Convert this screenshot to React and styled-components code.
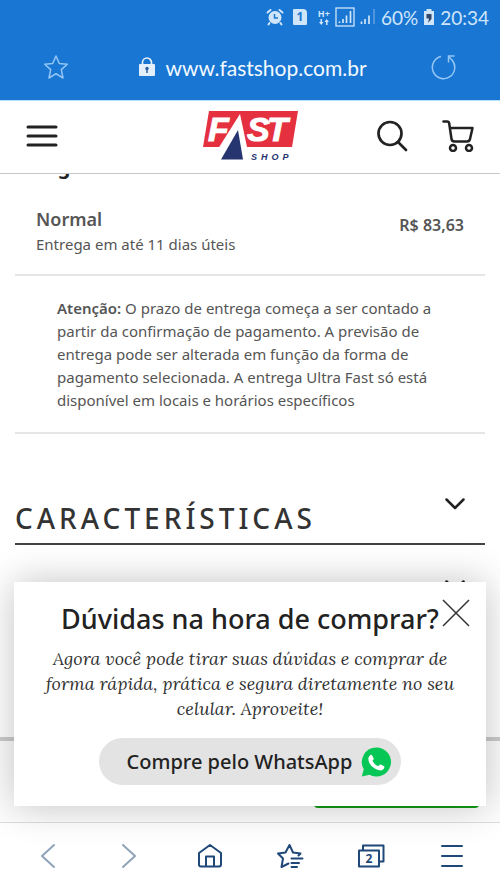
import styled, { createGlobalStyle } from 'styled-components';

const GlobalStyle = createGlobalStyle`
    * {
        box-sizing: border-box;
    }

    body {
        margin: 0;
        background: white;
        font-family: "Noto Sans", "Open Sans", sans-serif;
        color: #555;
    }

    h2, p {
        margin: 0;
    }

    button {
        padding: 0;
        border: none;
        background: none;
        font: inherit;
        color: inherit;
        cursor: pointer;
    }

    svg {
        display: block;
    }
`;

function StatusBar() {
    return (
        <Status>
            <svg width="18" height="18" viewBox="0 0 18 18" fill="none">
                <circle cx="9" cy="9.5" r="6.5" fill="#cfe5fa" />
                <path d="M1.500 4.500L4.500 2M16.500 4.500L13.500 2M3.500 15L2.500 16.500M14.500 15L15.500 16.500" stroke="#cfe5fa" strokeWidth="2" strokeLinecap="round" />
                <path d="M8.5 6v4H12" stroke="#1976d2" strokeWidth="1.5" />
            </svg>
            <SimCard>1</SimCard>
            <Network>
                <span>H+</span>
                <svg width="10" height="6" viewBox="0 0 10 6" fill="#cfe5fa">
                    <path d="M0 3h1.500V0h1.500v3H4.500L2.200 6zM5.500 3L7.700 0 10 3H8.500v3H7V3z" />
                </svg>
            </Network>
            <svg width="20" height="20" viewBox="0 0 20 20" fill="none" stroke="#cfe5fa">
                <rect x="1" y="1" width="18" height="18" strokeWidth="1.3" />
                <path d="M4.500 14.500V16M8 12v4M11.500 8.500V16M15.500 4v12" strokeWidth="1.7" />
            </svg>
            <svg width="16" height="20" viewBox="0 0 16 20" fill="none" stroke="#cfe5fa" strokeWidth="1.7">
                <path d="M1.500 14.500V17M5 12v5M9 8.500V17" />
                <path d="M14 2v15" strokeWidth="1" opacity="0.6" />
            </svg>
            <StatusText>60%</StatusText>
            <svg width="12" height="18" viewBox="0 0 12 18">
                <path d="M3.500 1h5v2H11v14H1V3h2.500z" fill="#cfe5fa" />
                <path d="M3.500 6h5v5L5 15l1-4.500H3.500z" fill="#31486b" />
            </svg>
            <StatusText>20:34</StatusText>
        </Status>
    );
}

function FastShopLogo() {
    return (
        <svg width="96" height="54" viewBox="0 0 96 54" role="img" aria-label="Fast Shop">
            <path d="M7 2H96L90 38H1z" fill="#e4303f" />
            <g fill="white" stroke="white" fontFamily="Liberation Sans" fontWeight="700" fontStyle="italic" fontSize="34">
                <text x="6" y="32">F</text>
                <text x="45" y="32">S</text>
                <text x="65" y="32">T</text>
            </g>
            <path d="M38 5L14 43V52H47L45 38z" fill="white" />
            <path d="M36 21L19 50.500H41z" fill="#26356f" />
            <text x="49" y="51" fill="#26356f" fontFamily="Liberation Sans" fontWeight="700" fontStyle="italic" fontSize="9" letterSpacing="4">SHOP</text>
        </svg>
    );
}

function Chevron() {
    return (
        <svg width="20" height="12" viewBox="0 0 20 12" fill="none" stroke="#222" strokeWidth="2.5" strokeLinecap="round" strokeLinejoin="round">
            <path d="M1.500 1.500L10 10l8.500-8.500" />
        </svg>
    );
}

function WhatsAppIcon() {
    return (
        <svg width="30" height="30" viewBox="0 0 30 30">
            <path d="M15.500.5a14.500 14.500 0 1 1-7 27.200L.8 29.500l2-7.200A14.500 14.500 0 0 1 15.500.5z" fill="#06c755" />
            <path d="M9 8.500c.8-.8 1.800-.9 2.200-.1l1.500 3c.3.700 0 1.200-1.200 2.400 1.300 2.600 3 4.200 5.800 5.400 1.200-1.500 1.700-1.900 2.400-1.600l3.100 1.500c.6.300.7.700.5 1.400-.6 2.200-2.700 3.200-4.800 2.800-5.400-1-9.900-5.100-11-9.900-.4-2 .2-3.800 1.500-4.900z" fill="white" />
        </svg>
    );
}

function Popup() {
    return (
        <PopupBox role="dialog" aria-labelledby="popup-title">
            <CloseButton aria-label="Fechar">
                <svg width="28" height="28" viewBox="0 0 28 28" stroke="#333" strokeWidth="1.5">
                    <path d="M1 1l26 26M27 1L1 27" />
                </svg>
            </CloseButton>
            <PopupTitle id="popup-title">Dúvidas na hora de comprar?</PopupTitle>
            <PopupText>
                Agora você pode tirar suas dúvidas e comprar de forma rápida, prática e segura diretamente no seu celular. Aproveite!
            </PopupText>
            <WhatsAppButton>
                Compre pelo WhatsApp
                <WhatsAppIcon />
            </WhatsAppButton>
        </PopupBox>
    );
}

function BottomNav() {
    return (
        <Nav>
            <NavButton aria-label="Voltar" $muted>
                <svg width="28" height="28" viewBox="0 0 28 28"><path d="M20 3L8 14l12 11" /></svg>
            </NavButton>
            <NavButton aria-label="Avançar" $muted>
                <svg width="28" height="28" viewBox="0 0 28 28"><path d="M8 3l12 11L8 25" /></svg>
            </NavButton>
            <NavButton aria-label="Início">
                <svg width="28" height="28" viewBox="0 0 28 28">
                    <path d="M14 3L3 11v11.500q0 2 2 2H23q2 0 2-2V11zM10 24.500V14.500h8v10" />
                </svg>
            </NavButton>
            <NavButton aria-label="Favoritos">
                <svg width="28" height="28" viewBox="0 0 28 28">
                    <path d="M12.500 21.500L5.500 25l1.500-8.500L2 11.500l7.500-1L13.500 3l3.500 7.500 7.500 1-2 2M15.500 16.500h11M15.500 21h7.500M15.500 25h5.500" />
                </svg>
            </NavButton>
            <NavButton aria-label="Abas">
                <svg width="28" height="28" viewBox="0 0 28 28">
                    <path d="M2 8.500h20v16H2zM6 8.500V3.500h20.500v16H22" />
                    <text x="12" y="21" textAnchor="middle" fontSize="12" fontWeight="700">2</text>
                </svg>
            </NavButton>
            <NavButton aria-label="Menu">
                <svg width="28" height="28" viewBox="0 0 28 28"><path d="M4 4h20M4 14h20M4 24h20" /></svg>
            </NavButton>
        </Nav>
    );
}

export default function App() {
    return (
        <Screen>
            <GlobalStyle />
            <Browser>
                <StatusBar />
                <AddressBar>
                    <button aria-label="Favoritar">
                        <svg width="26" height="26" viewBox="0 0 26 26" fill="none" stroke="#94c6f5" strokeWidth="1.5" strokeLinejoin="round">
                            <path d="M13 2l3.300 7.500 8 .8-6 5.300 1.700 8.400-7-4.300L6 24l1.700-8.400-6-5.300 8-.8z" />
                        </svg>
                    </button>
                    <Url>
                        <svg width="16" height="20" viewBox="0 0 16 20">
                            <path d="M3.500 9V5.500a4.500 4.500 0 0 1 9 0V9" fill="none" stroke="#e3effb" strokeWidth="1.7" />
                            <rect y="7" width="16" height="12" rx="1" fill="#e3effb" />
                            <circle cx="8" cy="11.5" r="1.7" fill="#2a5f9e" />
                            <path d="M8 11v5" stroke="#2a5f9e" strokeWidth="1.5" />
                        </svg>
                        www.fastshop.com.br
                    </Url>
                    <button aria-label="Atualizar">
                        <svg width="26" height="26" viewBox="0 0 26 26" fill="none" stroke="#94c6f5" strokeWidth="1.5">
                            <path d="M10 2.500a11.200 11.200 0 1 0 10.500 3L17.500 2.500M23.500 2H17.500v6.500" />
                        </svg>
                    </button>
                </AddressBar>
            </Browser>
            <SiteHeader>
                <button aria-label="Abrir menu">
                    <svg width="32" height="24" viewBox="0 0 32 24" stroke="#222" strokeWidth="3" strokeLinecap="round">
                        <path d="M2 3h28M2 12h28M2 21h28" />
                    </svg>
                </button>
                <LogoLink href="#"><FastShopLogo /></LogoLink>
                <HeaderActions>
                    <button aria-label="Buscar">
                        <svg width="32" height="32" viewBox="0 0 32 32" fill="none" stroke="#222" strokeWidth="2.7" strokeLinecap="round">
                            <circle cx="14" cy="13.5" r="11.5" />
                            <path d="M22 22l8 8" />
                        </svg>
                    </button>
                    <button aria-label="Carrinho">
                        <svg width="32" height="32" viewBox="0 0 32 32" fill="none" stroke="#222" strokeWidth="2.5" strokeLinecap="round" strokeLinejoin="round">
                            <path d="M1.500 1.500H5q2 0 2.200 2L9.500 19q.4 2.500 3 2.500H25q2.500 0 3-2.500l2.500-11H8" />
                            <circle cx="11" cy="28" r="3" />
                            <circle cx="27" cy="28" r="3" />
                        </svg>
                    </button>
                </HeaderActions>
            </SiteHeader>
            <Page>
                <Content>
                    <ScrolledLine>rg</ScrolledLine>
                    <ShippingRow>
                        <div>
                            <ShippingName>Normal</ShippingName>
                            <ShippingTime>Entrega em até 11 dias úteis</ShippingTime>
                        </div>
                        <ShippingPrice>R$ 83,63</ShippingPrice>
                    </ShippingRow>
                    <Notice>
                        <strong>Atenção:</strong> O prazo de entrega começa a ser contado a partir da confirmação de pagamento. A previsão de entrega pode ser alterada em função da forma de pagamento selecionada. A entrega Ultra Fast só está disponível em locais e horários específicos
                    </Notice>
                    <SectionButton>
                        <SectionTitle>CARACTERÍSTICAS</SectionTitle>
                        <Chevron />
                    </SectionButton>
                    <NextSection aria-label="Próxima seção">
                        <Chevron />
                    </NextSection>
                </Content>
                <BuyBar>
                    <BuyButton aria-label="Comprar" />
                </BuyBar>
                <Popup />
            </Page>
            <BottomNav />
        </Screen>
    );
}

const Screen = styled.div`
    height: 100vh;
    display: flex;
    flex-direction: column;
`;

const Browser = styled.header`
    background: #1976d2;
    border-bottom: 1px solid #b5e0fb;
`;

const Status = styled.div`
    height: 34px;
    padding: 0 11px;
    display: flex;
    justify-content: flex-end;
    align-items: center;
    gap: 5px;
    color: #cfe5fa;
`;

const SimCard = styled.span`
    width: 14px;
    height: 16px;
    margin: 0 6px 0 4px;
    border-radius: 1px 4px 1px 1px;
    background: #cfe5fa;
    color: #1976d2;
    font-size: 12px;
    font-weight: 700;
    line-height: 16px;
    text-align: center;
`;

const Network = styled.span`
    display: flex;
    flex-direction: column;
    align-items: center;
    font-size: 9px;
    font-weight: 700;
    line-height: 10px;
`;

const StatusText = styled.span`
    font-family: Lato, sans-serif;
    font-size: 19px;
`;

const AddressBar = styled.div`
    height: 66px;
    padding: 0 43px;
    display: flex;
    justify-content: space-between;
    align-items: center;
`;

const Url = styled.div`
    padding-left: 6px;
    display: flex;
    align-items: center;
    gap: 10px;
    color: #f2f9ff;
    font-family: Lato, sans-serif;
    font-size: 21px;
`;

const SiteHeader = styled.header`
    height: 73px;
    padding: 0 26px 2px;
    display: grid;
    grid-template-columns: 1fr auto 1fr;
    align-items: center;
    flex-shrink: 0;
    justify-items: start;
    border-bottom: 1px solid #c8c8c8;
`;

const LogoLink = styled.a`
    display: block;
`;

const HeaderActions = styled.div`
    display: flex;
    gap: 34px;
    justify-self: end;
`;

const Page = styled.main`
    position: relative;
    flex: 1;
    min-height: 0;
    display: flex;
    flex-direction: column;
`;

const Content = styled.div`
    flex: 1;
    min-height: 0;
    padding: 0 15px;
    overflow: hidden;
`;

/* tail of the previous option, scrolled under the header */
const ScrolledLine = styled.div`
    height: 5px;
    padding-left: 34px;
    display: flex;
    align-items: flex-end;
    overflow: hidden;
    color: #222;
    font-size: 20px;
    font-weight: 700;
    line-height: 24px;
`;

const ShippingRow = styled.div`
    padding: 27px 21px 18px;
    display: flex;
    justify-content: space-between;
    align-items: flex-start;
    border-bottom: 2px solid #e5e5e5;
`;

const ShippingName = styled.p`
    font-size: 18px;
    font-weight: 600;
    line-height: 26px;
`;

const ShippingTime = styled.p`
    font-size: 15px;
    line-height: 24px;
`;

const ShippingPrice = styled.span`
    font-size: 16px;
    font-weight: 600;
    line-height: 38px;
`;

const Notice = styled.p`
    padding: 21px 42px 20px;
    border-bottom: 2px solid #e5e5e5;
    font-size: 15px;
    line-height: 23px;

    strong {
        font-weight: 600;
    }
`;

const SectionButton = styled.button`
    width: 100%;
    padding: 64px 20px 5px 0;
    display: flex;
    justify-content: space-between;
    align-items: flex-start;
    border-bottom: 2px solid #444;
`;

const SectionTitle = styled.span`
    color: #333;
    font-size: 28px;
    font-weight: 500;
    line-height: 40px;
    letter-spacing: 4px;
`;

const NextSection = styled.button`
    width: 100%;
    padding: 35px 20px;
    display: flex;
    justify-content: flex-end;
`;

const BuyBar = styled.div`
    height: 85px;
    padding: 14px 21px;
    display: flex;
    justify-content: flex-end;
    border-top: 4px solid #ccc;
    background: #fdfdfd;
`;

const BuyButton = styled.button`
    width: 36%;
    border-radius: 4px;
    background: #129b16;
`;

const PopupBox = styled.section`
    position: absolute;
    right: 14px;
    bottom: 16px;
    left: 14px;
    padding: 19px 26px 21px;
    display: flex;
    flex-direction: column;
    align-items: center;
    background: white;
    box-shadow: 0 0 36px rgba(0, 0, 0, 0.24);
    text-align: center;
`;

const CloseButton = styled.button`
    position: absolute;
    top: 17px;
    right: 16px;
`;

const PopupTitle = styled.h2`
    color: #222;
    font-size: 27px;
    font-weight: 500;
    line-height: 36px;
`;

const PopupText = styled.p`
    padding: 9px 0 17px;
    color: #333;
    font-family: Lora, "Liberation Serif", serif;
    font-size: 18px;
    font-style: italic;
    line-height: 25px;
`;

const WhatsAppButton = styled.button`
    height: 47px;
    padding: 0 10px 0 28px;
    display: flex;
    align-items: center;
    gap: 9px;
    border-radius: 24px;
    background: #e3e3e3;
    color: #222;
    font-size: 20px;
    font-weight: 500;
`;

const Nav = styled.nav`
    height: 67px;
    padding: 0 8px;
    display: flex;
    flex-shrink: 0;
    border-top: 1px solid #ddd;
    background: white;
`;

const NavButton = styled.button`
    flex: 1;
    display: flex;
    justify-content: center;
    align-items: center;
    color: ${props => props.$muted ? '#8fa3b8' : '#1f4878'};

    path {
        fill: none;
        stroke: currentColor;
        stroke-width: 2;
        stroke-linecap: round;
        stroke-linejoin: round;
    }

    text {
        fill: currentColor;
    }
`;
